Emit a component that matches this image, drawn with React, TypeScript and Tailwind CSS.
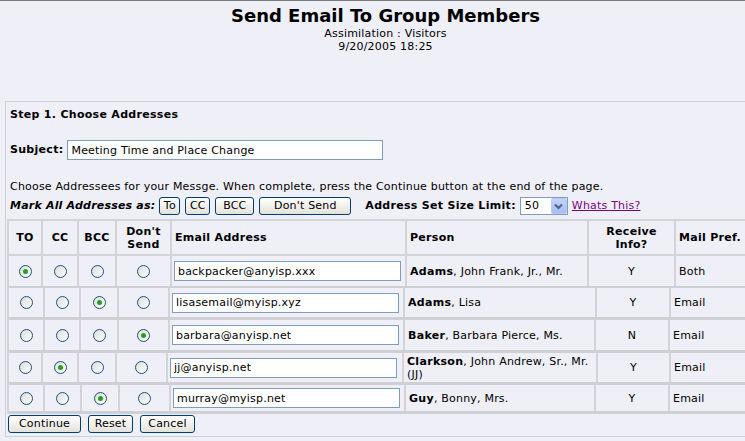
import React from "react";

const F = { fontFamily: '"DejaVu Sans", Verdana, sans-serif', letterSpacing: "0.2px" } as const;

function Radio({ on }: { on?: boolean }) {
  return (
    <span className="relative inline-block w-[13px] h-[13px] rounded-full border border-[#1c5180] bg-gradient-to-br from-[#dcdcd7] to-[#ffffff]">
      {on && (
        <span className="absolute left-[3px] top-[3px] w-[5px] h-[5px] rounded-full bg-[#21a121]" />
      )}
    </span>
  );
}

function Btn({ children, w }: { children: React.ReactNode; w: string }) {
  return (
    <button
      className={`${w} h-[18px] rounded-[3px] border border-[#003c74] bg-gradient-to-b from-[#ffffff] to-[#e3e2da] text-[11px] leading-[14px] text-black flex items-center justify-center`}
      style={F}
    >
      {children}
    </button>
  );
}

type Row = {
  w: number[];
  h: number;
  email: string;
  last: string;
  rest: React.ReactNode;
  recv: string;
  pref: string;
  sel: number;
};

const rows: Row[] = [
  { w: [34, 36, 38, 55, 235, 182, 87], h: 32, email: "backpacker@anyisp.xxx", last: "Adams", rest: ", John Frank, Jr., Mr.", recv: "Y", pref: "Both", sel: 0 },
  { w: [36, 36, 38, 51, 235, 192, 74], h: 32, email: "lisasemail@myisp.xyz", last: "Adams", rest: ", Lisa", recv: "Y", pref: "Email", sel: 2 },
  { w: [36, 36, 38, 51, 235, 191, 74], h: 33, email: "barbara@anyisp.net", last: "Baker", rest: ", Barbara Pierce, Ms.", recv: "N", pref: "Email", sel: 3 },
  { w: [34, 36, 38, 51, 236, 194, 73], h: 32, email: "jj@anyisp.net", last: "Clarkson", rest: (<>, John Andrew, Sr., Mr.<br />(JJ)</>), recv: "Y", pref: "Email", sel: 1 },
  { w: [36, 37, 38, 51, 235, 190, 74], h: 29, email: "murray@myisp.net", last: "Guy", rest: ", Bonny, Mrs.", recv: "Y", pref: "Email", sel: 2 },
];

export default function App() {
  return (
    <div className="w-[745px] h-[441px] overflow-hidden bg-[#efeff7] border-t border-[#7a7a7a] text-black" style={F}>
      <div className="w-[771px] flex flex-col items-center pt-[4px]">
        <div className="text-[18px] leading-[22px] font-bold" style={{ letterSpacing: "0px" }}>
          Send Email To Group Members
        </div>
        <div className="text-[11px] leading-[13px]">Assimilation : Visitors</div>
        <div className="text-[11px] leading-[13px]">9/20/2005 18:25</div>
      </div>
      <div className="w-[800px] ml-[5px] mt-[48px] h-[336px] border-t border-l border-b border-[#cfcfd6] pl-[1px]">
        <div className="pl-[3px] pt-[6px] text-[11px] leading-[14px] font-bold" style={{ letterSpacing: "0.3px" }}>
          Step 1. Choose Addresses
        </div>
        <div className="flex items-center pl-[3px] mt-[18px] h-[20px] text-[11px]">
          <span className="font-bold mr-[4px]" style={{ letterSpacing: "0.3px" }}>Subject:</span>
          <input
            className="w-[316px] h-[20px] border border-[#7f9db9] bg-white px-[3px] text-[11px] text-black outline-none"
            style={F}
            defaultValue="Meeting Time and Place Change"
          />
        </div>
        <div className="pl-[3px] mt-[20px] text-[11px] leading-[14px]">
          Choose Addressees for your Messge. When complete, press the Continue button at the end of the page.
        </div>
        <div className="flex items-center pl-[3px] mt-[3px] h-[18px] text-[11px]">
          <span className="font-bold italic mr-[4px]" style={{ letterSpacing: "0.2px" }}>Mark All Addresses as:</span>
          <div className="flex gap-[5px]">
            <Btn w="w-[21px]">To</Btn>
            <Btn w="w-[25px]">CC</Btn>
            <Btn w="w-[39px]">BCC</Btn>
            <Btn w="w-[92px]">Don't Send</Btn>
          </div>
          <span className="font-bold ml-[14px] mr-[4px]" style={{ letterSpacing: "0.3px" }}>Address Set Size Limit:</span>
          <div className="flex w-[48px] h-[18px] border border-[#7f9db9] bg-white">
            <span className="flex-1 pl-[4px] leading-[16px]">50</span>
            <span className="w-[16px] h-[16px] rounded-[2px] bg-gradient-to-b from-[#c3d3fd] to-[#a6bef4] border border-[#b7c9f5] flex items-center justify-center">
              <svg width="9" height="7" viewBox="0 0 9 7">
                <path d="M1 1.5 L4.5 5 L8 1.5" fill="none" stroke="#4d6185" strokeWidth="2" />
              </svg>
            </span>
          </div>
          <a className="ml-[4px] text-[#800080] underline">Whats This?</a>
        </div>
        <div className="mt-[4px] border-l-2 border-t-2 border-[#d3d3d8]">
          <div className="flex h-[35px] border-b-2 border-[#d3d3d8] text-[11px] font-bold leading-[13px]" style={{ letterSpacing: "0.3px" }}>
            {[
              ["TO", 34, "center"],
              ["CC", 36, "center"],
              ["BCC", 38, "center"],
              ["Don't\nSend", 55, "center"],
              ["Email Address", 235, "left"],
              ["Person", 182, "left"],
              ["Receive\nInfo?", 87, "center"],
            ].map(([t, w, a], i) => (
              <div
                key={i}
                className={`shrink-0 border-r-2 border-[#d3d3d8] flex items-center whitespace-pre-line ${a === "center" ? "justify-center text-center" : "pl-[3px]"}`}
                style={{ width: w as number }}
              >
                {t}
              </div>
            ))}
            <div className="flex-1 flex items-center pl-[3px]">Mail Pref.</div>
          </div>
          {rows.map((r, ri) => (
            <div key={ri} className={`flex text-[11px] leading-[13px] ${ri === 0 ? "border-b-2" : "border-b-[3px]"} border-[#cfcfd4]`} style={{ height: r.h }}>
              {[0, 1, 2, 3].map((c) => (
                <div key={c} className="shrink-0 border-r-2 border-[#d3d3d8] flex items-center justify-center" style={{ width: r.w[c] }}>
                  <Radio on={r.sel === c} />
                </div>
              ))}
              <div className="shrink-0 border-r-2 border-[#d3d3d8] flex items-center pl-[2px]" style={{ width: r.w[4] }}>
                <input
                  className="w-[227px] h-[20px] border border-[#7f9db9] bg-white px-[3px] text-[11px] text-black outline-none"
                  style={F}
                  defaultValue={r.email}
                />
              </div>
              <div className="shrink-0 border-r-2 border-[#d3d3d8] flex items-center pl-[3px]" style={{ width: r.w[5] }}>
                <span>
                  <b style={{ letterSpacing: "0.3px" }}>{r.last}</b>
                  {r.rest}
                </span>
              </div>
              <div className="shrink-0 border-r-2 border-[#d3d3d8] flex items-center justify-center" style={{ width: r.w[6] }}>
                {r.recv}
              </div>
              <div className="flex-1 flex items-center pl-[3px]">{r.pref}</div>
            </div>
          ))}
        </div>
        <div className="flex gap-[7px] mt-[1px] ml-[1px]">
          <Btn w="w-[73px]">Continue</Btn>
          <Btn w="w-[45px]">Reset</Btn>
          <Btn w="w-[55px]">Cancel</Btn>
        </div>
      </div>
    </div>
  );
}
